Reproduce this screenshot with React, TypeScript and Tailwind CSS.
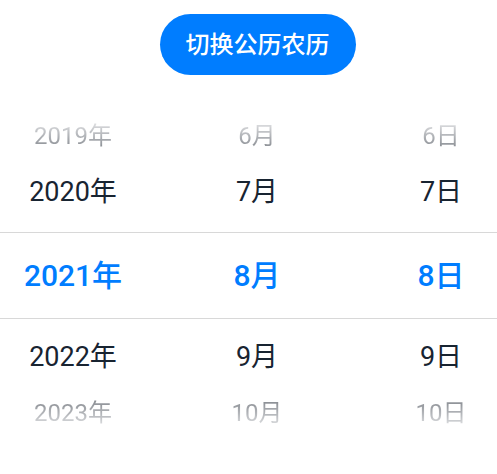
const years = ['2019年', '2020年', '2021年', '2022年', '2023年']
const months = ['6月', '7月', '8月', '9月', '10月']
const days = ['6日', '7日', '8日', '9日', '10日']

const font = { fontFamily: "Roboto, 'Noto Sans CJK SC', sans-serif" }

function FarRow({ idx, top }: { idx: number; top: boolean }) {
  const fade = top
    ? 'bg-gradient-to-b from-[#e2e3e5] to-[#83878d]'
    : 'bg-gradient-to-b from-[#83878d] to-[#e2e3e5]'
  const cells = [years[idx], months[idx], days[idx]]
  return (
    <div className="grid grid-cols-[146px_222px_1fr] h-[56px] items-center text-[24px]">
      {cells.map((c, i) => (
        <div key={i} className={`text-center ${i === 2 ? 'pl-[17px]' : ''}`}>
          <span className={`${fade} bg-clip-text text-transparent`}>{c}</span>
        </div>
      ))}
    </div>
  )
}

function NearRow({ idx }: { idx: number }) {
  const cells = [years[idx], months[idx], days[idx]]
  return (
    <div className="grid grid-cols-[146px_222px_1fr] h-[56px] items-center text-[27px] text-[#182431]">
      {cells.map((c, i) => (
        <div key={i} className={`text-center ${i === 2 ? 'pl-[17px]' : ''}`}>{c}</div>
      ))}
    </div>
  )
}

export default function App() {
  return (
    <div className="w-[497px] h-[474px] bg-white flex flex-col items-center pt-[14px] overflow-hidden" style={font}>
      <button className="ml-[18px] h-[61px] px-[26px] rounded-full bg-[#007DFF] text-white text-[24px] font-medium">
        切换公历农历
      </button>

      <div className="w-full mt-[33px] flex flex-col">
        <FarRow idx={0} top />
        <NearRow idx={1} />

        <div className="mt-[12px] mb-[10px] h-[87px] border-y border-[#d8d8d8] grid grid-cols-[146px_222px_1fr] items-center text-[30px] font-medium text-[#007DFF]">
          <div className="text-center">{years[2]}</div>
          <div className="text-center">{months[2]}</div>
          <div className="text-center pl-[17px]">{days[2]}</div>
        </div>

        <NearRow idx={3} />
        <FarRow idx={4} top={false} />
      </div>
    </div>
  )
}
